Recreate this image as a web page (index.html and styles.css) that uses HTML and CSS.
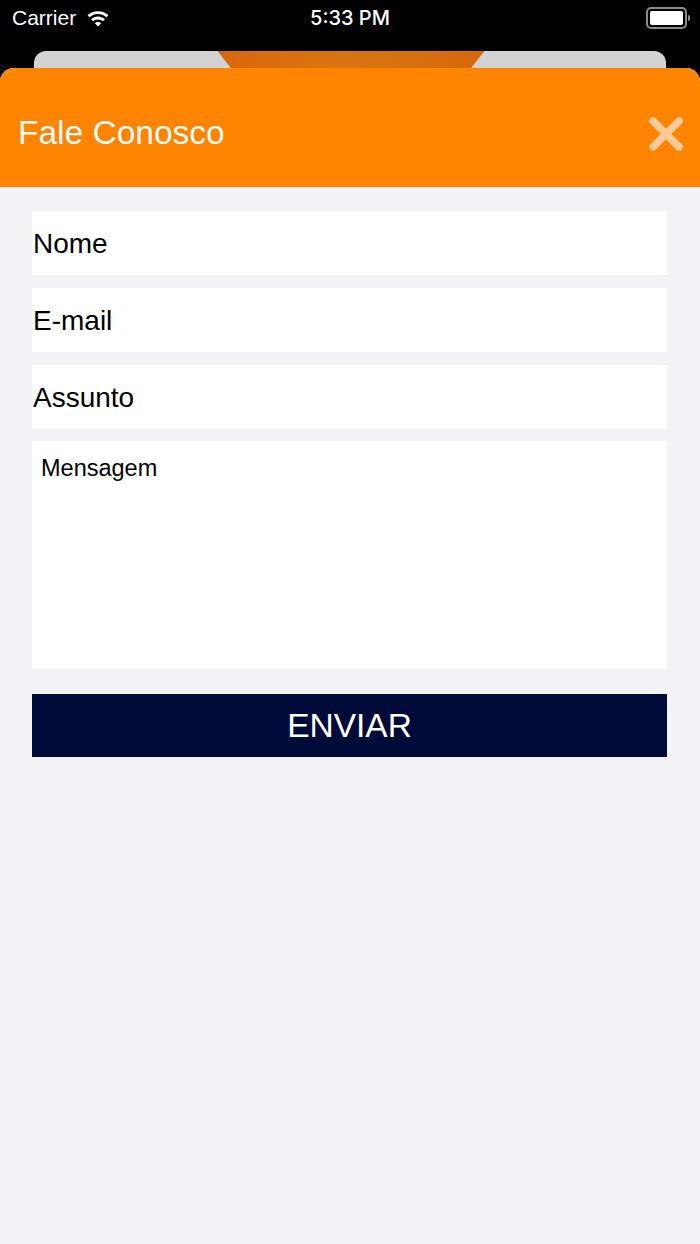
FILE: index.html
```html
<!doctype html>
<html lang="pt-BR">
<head>
    <meta charset="utf-8">
    <meta name="viewport" content="width=device-width, initial-scale=1">
    <title>Fale Conosco</title>
    <link rel="stylesheet" href="styles.css">
</head>
<body>
    <div class="status-bar">
        <div class="status-left">
            <span class="carrier">Carrier</span>
            <svg class="wifi" width="24" height="18" viewBox="0 0 24 18">
                <path d="M12 2.2c4 0 7.6 1.5 10.4 4.1l-1.9 2C18.2 6.2 15.2 5 12 5S5.8 6.2 3.5 8.3l-1.9-2C4.4 3.7 8 2.2 12 2.2z" fill="#fff"/>
                <path d="M12 7.6c2.6 0 5 1 6.8 2.7l-1.9 2c-1.3-1.2-3-1.9-4.9-1.9s-3.6.7-4.9 1.9l-1.9-2C7 8.6 9.4 7.6 12 7.6z" fill="#fff"/>
                <path d="M12 13c1.2 0 2.3.5 3.1 1.2L12 17.4l-3.1-3.2C9.7 13.5 10.8 13 12 13z" fill="#fff"/>
            </svg>
        </div>
        <span class="clock">5:33 PM</span>
        <div class="battery">
            <span class="battery-body"><span class="battery-level"></span></span>
            <span class="battery-nub"></span>
        </div>
    </div>

    <div class="behind-card">
        <div class="behind-banner"></div>
    </div>

    <div class="sheet">
        <header class="sheet-header">
            <h1>Fale Conosco</h1>
            <button class="close" type="button" aria-label="Fechar">
                <svg width="36" height="36" viewBox="0 0 36 36">
                    <path d="M5 5L31 31M31 5L5 31" stroke="#ffca98" stroke-width="7.5" stroke-linecap="round"/>
                </svg>
            </button>
        </header>

        <form class="contact-form">
            <input type="text" name="nome" placeholder="Nome">
            <input type="email" name="email" placeholder="E-mail">
            <input type="text" name="assunto" placeholder="Assunto">
            <textarea name="mensagem" placeholder="Mensagem"></textarea>
            <button type="submit" class="send">ENVIAR</button>
        </form>
    </div>
</body>
</html>
```

FILE: styles.css
```css
html, body {
    margin: 0;
    height: 100%;
}
body {
    background-color: #000;
    font-family: "Liberation Sans", Arial, sans-serif;
    display: flex;
    flex-direction: column;
}
.status-bar {
    height: 51px;
    display: flex;
    align-items: flex-start;
    justify-content: space-between;
    color: #fff;
    padding: 0 10px 0 12px;
    box-sizing: border-box;
    position: relative;
}
.status-left {
    display: flex;
    align-items: center;
    gap: 10px;
    height: 36px;
}
.carrier {
    font-size: 21px;
}
.clock {
    position: absolute;
    left: 0;
    right: 0;
    top: 0;
    height: 36px;
    line-height: 36px;
    text-align: center;
    font-family: Inter, "Liberation Sans", sans-serif;
    font-size: 20px;
    font-weight: 500;
}
.battery {
    display: flex;
    align-items: center;
    height: 36px;
    gap: 1px;
}
.battery-body {
    width: 33px;
    height: 14px;
    border: 2px solid #8a8a8a;
    border-radius: 5px;
    padding: 2px;
    display: flex;
}
.battery-level {
    flex: 1;
    background-color: #fff;
    border-radius: 2px;
}
.battery-nub {
    width: 2px;
    height: 6px;
    background-color: #8a8a8a;
    border-radius: 0 2px 2px 0;
}
.behind-card {
    height: 17px;
    margin: 0 34px;
    background-color: #d3d3d3;
    border-radius: 12px 12px 0 0;
    display: flex;
    justify-content: center;
    overflow: hidden;
}
.behind-banner {
    width: 267px;
    margin-left: 2px;
    background: linear-gradient(90deg, #d8670c 0%, #db7410 40%, #d87410 60%, #d8670c 100%);
    clip-path: polygon(0 0, 100% 0, 95% 100%, 5% 100%);
}
.sheet {
    flex: 1;
    background-color: #f2f2f7;
    border-radius: 14px 14px 0 0;
    overflow: hidden;
}
.sheet-header {
    height: 119px;
    background-color: #ff8500;
    display: flex;
    align-items: center;
    justify-content: space-between;
    padding: 0 16px 0 18px;
}
.sheet-header h1 {
    margin: 0;
    font-size: 33.5px;
    font-weight: normal;
    color: #f9f9f9;
    padding-top: 10px;
}
.close {
    background: none;
    border: none;
    padding: 0;
    width: 36px;
    height: 36px;
    margin-top: 12px;
    cursor: pointer;
}
.contact-form {
    display: flex;
    flex-direction: column;
    padding: 24px 33px 0 32px;
}
input, textarea {
    border: none;
    background-color: #fff;
    font-family: "Liberation Sans", Arial, sans-serif;
    color: #000;
    margin: 0;
    outline: none;
    box-sizing: border-box;
}
input {
    height: 64px;
    font-size: 28px;
    padding: 2px 1px 0;
    margin-bottom: 13px;
}
input[name="assunto"] {
    margin-bottom: 12px;
}
textarea {
    height: 228px;
    font-size: 23.5px;
    padding: 14px 9px;
    resize: none;
    margin-bottom: 25px;
}
input::placeholder, textarea::placeholder {
    color: #000;
    opacity: 1;
}
.send {
    height: 63px;
    background-color: #000b3a;
    color: #fff;
    border: none;
    font-family: "Liberation Sans", Arial, sans-serif;
    font-size: 33.5px;
    cursor: pointer;
}
```
